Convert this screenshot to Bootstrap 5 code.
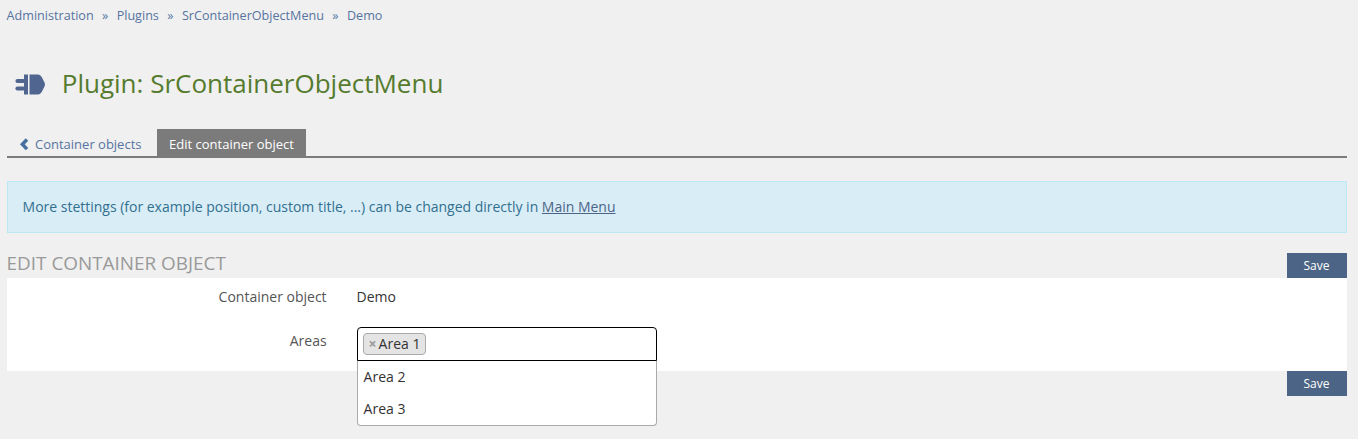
<!DOCTYPE html>
<html lang="en">
<head>
<meta charset="utf-8">
<meta name="viewport" content="width=device-width, initial-scale=1">
<title>Plugin: SrContainerObjectMenu</title>
<link rel="stylesheet" href="https://cdn.jsdelivr.net/npm/bootstrap@5.3.0/dist/css/bootstrap.min.css">
<style>
body { background: #f0f0f0; color: #333; font: 14px/20px "Open Sans", sans-serif; padding: 0 11px 0 6.6px; min-height: 439px; }
a { color: #557ba8; }
.crumbs { --bs-breadcrumb-divider: "»"; --bs-breadcrumb-item-padding-x: 8.4px; --bs-breadcrumb-divider-color: #557ba8; font-size: 12.6px; line-height: 19px; padding-top: 6px; height: 64px; align-content: flex-start; }
.crumbs a, .tabs a, .crumbs { color: #5774a0; text-decoration: none; }
.page-title { height: 65px; padding: 0 0 0 8.4px; }
.page-title svg { display: block; margin-top: 10px; }
.page-title h1 { font-size: 26px; font-weight: 400; line-height: 29px; color: #557b2e; margin: 5px 0 0 16.8px; }
.tabs { border-bottom: 2px solid #7b7b7b; height: 29px; font-size: 13px; line-height: 19px; }
.tabs .nav-link { padding: 6px 12px 2px; height: 27px; border-radius: 0; }
.tabs .nav-link svg { margin-right: 4.4px; }
.tabs .nav-link.active { background: #7b7b7b; color: #fff; margin-left: 3.6px; }
.notice { background: #d9edf7; border: 1px solid #bce8f1; border-radius: 0; color: #31708f; padding: 15px; height: 52px; margin: 23px 0 20px; letter-spacing: -.012px; }
.notice a { color: #4c6586; }
.form-head { height: 25px; }
.form-head h2 { font-size: 18.9px; font-weight: 400; line-height: 20px; color: #999; }
.btn-save { background: #4c6586; color: #fff; border: 0; border-radius: 0; width: 60px; height: 25px; padding: 0 1px 0 0; font-size: 12px; line-height: 25px; }
.btn-save:hover { background: #3a4c65; color: #fff; }
.form-panel { height: 93px; padding-top: 9px; }
.form-line { height: 40px; }
.form-line label { width: 320px; text-align: right; color: #555; margin-right: 30px; }
.picker { width: 300px; margin-top: -4px; }
.picker-box { height: 34px; border: 1px solid #000; border-radius: 4px 4px 0 0; background: #fff; padding: 5px; }
.chip { height: 22px; border: 1px solid #aaa; border-radius: 4px; background: #e4e4e4; padding: 0 5px; line-height: 20px; }
.chip span { color: #999; font-weight: 700; margin-right: 2px; }
.picker-menu { min-width: 0; width: 300px; top: 34px; left: 0; background: #fff; border: 1px solid #aaa; border-top: 0; border-radius: 0 0 4px 4px; padding: 0; font-size: 14px; margin: 0; }
.picker-menu .dropdown-item { padding: 6px; height: 32px; line-height: 20px; color: #333; }
</style>
</head>
<body>
<nav aria-label="breadcrumb">
  <ol class="breadcrumb crumbs mb-0">
    <li class="breadcrumb-item"><a href="#">Administration</a></li>
    <li class="breadcrumb-item"><a href="#">Plugins</a></li>
    <li class="breadcrumb-item"><a href="#">SrContainerObjectMenu</a></li>
    <li class="breadcrumb-item"><a href="#">Demo</a></li>
  </ol>
</nav>
<header class="page-title d-flex align-items-start">
  <svg width="30" height="21" viewBox="0 0 30 21" fill="#506690" aria-hidden="true">
    <rect x=".4" y="5" width="10" height="4" rx="2"/><rect x=".4" y="12.600" width="10" height="4" rx="2"/>
    <path d="M9 .5h4v20H9zM14.500.5H23c1.500 0 2.900 1 4 3l2.500 5q.9 2 0 4l-2.500 5c-1.100 2-2.500 3-4 3h-8.500z"/>
  </svg>
  <h1>Plugin: SrContainerObjectMenu</h1>
</header>
<nav class="nav tabs">
  <a class="nav-link d-flex" href="#"><svg width="12" height="19" viewBox="0 0 12 19" fill="none" stroke="#4670a0" stroke-width="3.500" aria-hidden="true"><path d="M8 4.500L3.400 9.300 8 14.100"/></svg>Container objects</a>
  <a class="nav-link active" href="#" aria-current="page">Edit container object</a>
</nav>
<div class="alert notice" role="alert">More stettings (for example position, custom title, ...) can be changed directly in <a href="#">Main Menu</a></div>
<form>
  <div class="form-head d-flex justify-content-between align-items-start">
    <h2 class="text-uppercase mb-0">Edit container object</h2>
    <button type="button" class="btn btn-save">Save</button>
  </div>
  <div class="form-panel bg-white">
    <div class="form-line d-flex"><label>Container object</label><div>Demo</div></div>
    <div class="form-line d-flex pt-1"><label>Areas</label>
      <div class="picker position-relative">
        <div class="picker-box d-flex"><div class="chip"><span>×</span>Area 1</div></div>
        <div class="picker-menu dropdown-menu show">
          <a class="dropdown-item" href="#">Area 2</a>
          <a class="dropdown-item" href="#">Area 3</a>
        </div>
      </div>
    </div>
  </div>
  <div class="d-flex justify-content-end"><button type="button" class="btn btn-save">Save</button></div>
</form>
<script src="https://cdn.jsdelivr.net/npm/bootstrap@5.3.0/dist/js/bootstrap.bundle.min.js"></script>
</body>
</html>
